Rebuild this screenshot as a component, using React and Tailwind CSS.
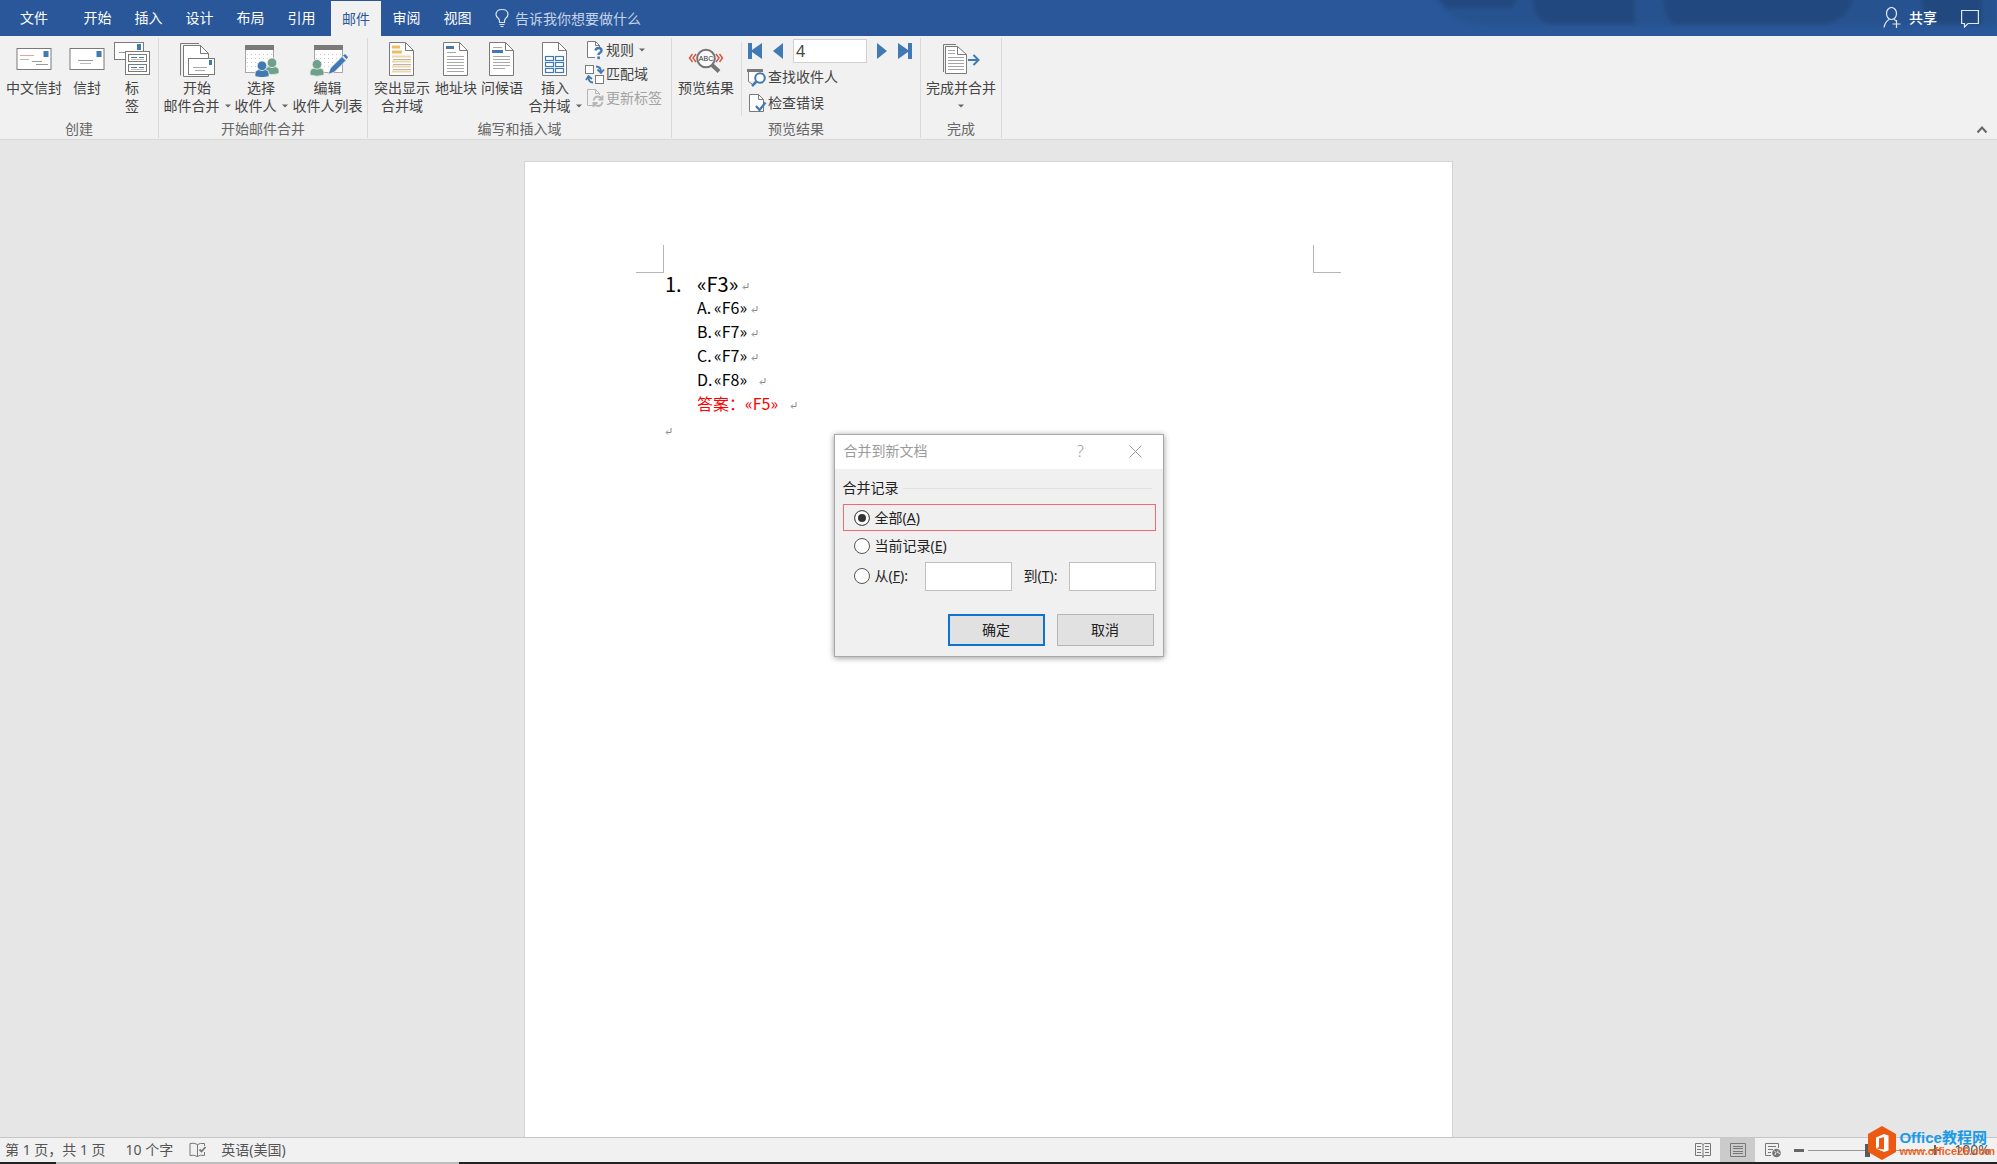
import React from "react";

const INK = "#7a7a7a";
const BLUE = "#4179b5";

function Lines({ x1, x2, ys, color = "#9a9a9a" }) {
  return ys.map((y) => <path key={y} d={`M${x1} ${y}H${x2}`} stroke={color} strokeWidth="1" />);
}

function Big({ children, w = 36 }) {
  return (
    <svg width={w} height="36" viewBox={`0 0 ${w} 36`} fill="none" className="block shrink-0" aria-hidden="true">
      {children}
    </svg>
  );
}

const ChineseEnvelopeIcon = () => (
  <Big>
    <rect x="1" y="7.5" width="34" height="21" fill="#fff" stroke={INK} />
    <rect x="27.5" y="10" width="5" height="6" fill={BLUE} />
    <Lines x1={4} x2={18} ys={[14.5]} color="#e3a3a0" />
    <Lines x1={4} x2={13} ys={[18.5]} color="#b9b9b9" />
    <Lines x1={16} x2={26} ys={[20.5]} />
    <Lines x1={20} x2={32} ys={[23.5]} />
  </Big>
);
const EnvelopeIcon = () => (
  <Big>
    <rect x="1" y="7.5" width="34" height="21" fill="#fff" stroke={INK} />
    <rect x="27.5" y="10" width="5" height="6" fill={BLUE} />
    <Lines x1={9} x2={24} ys={[19.5]} />
    <Lines x1={11} x2={22} ys={[22.5]} color="#b9b9b9" />
  </Big>
);
const LabelsIcon = () => (
  <Big>
    <rect x=".5" y="1.5" width="29" height="17" fill="#fff" stroke={INK} />
    <rect x="23" y="3" width="4" height="6" fill={BLUE} />
    <Lines x1={5} x2={12} ys={[11.5]} />
    <rect x="11.500" y="10.500" width="24" height="23" fill="#fff" stroke={INK} />
    <rect x="14.500" y="13.500" width="18" height="7" stroke={INK} />
    <rect x="14.500" y="23.500" width="18" height="7" stroke={INK} />
    <path d="M17 16.500h6M25 16.500h5M17 26.500h6M25 26.500h5" stroke={BLUE} />
    <path d="M17 18.500h13M17 28.500h13" stroke="#bbb" />
  </Big>
);
const StartMergeIcon = () => (
  <Big>
    <path d="M1.500 34.500V2.500H20" stroke={INK} />
    <path d="M4.500 35.500V4.500H21.500L29.500 12.500V35.500Z" fill="#fff" stroke={INK} />
    <path d="M21.500 4.500V12.500H29.500" stroke={INK} />
    <rect x="9.500" y="17.500" width="26" height="16" fill="#fff" stroke={INK} />
    <rect x="30" y="19" width="3" height="5" fill={BLUE} />
    <path d="M14 26.500h14M16 29.500h10" stroke="#aaa" />
  </Big>
);
const Sheet = () => (
  <>
    <rect x="2.500" y="4.500" width="28" height="27" fill="#fff" stroke="#a5a5a5" />
    <rect x="2" y="4" width="29" height="5" fill="#7a7a7a" />
    <path d="M4 13.500h25M4 17.500h25M4 21.500h25M4 25.500h25" stroke="#c9c9c9" strokeDasharray="1 3" />
  </>
);
const Person = ({ x, y, fill }) => (
  <g transform={`translate(${x} ${y})`} fill={fill} stroke="#f0f0f0" strokeWidth=".8">
    <path d="M0 15.500V12.500Q0 9 4 8.500H10Q14 9 14 12.500V15.500Q7 18 0 15.500Z" />
    <circle cx="7" cy="4.800" r="4.800" />
  </g>
);
const SelectIcon = () => (
  <Big>
    <Sheet />
    <Person x={22} y={17} fill="#6fa08a" />
    <Person x={12} y={20} fill={BLUE} />
  </Big>
);
const EditIcon = () => (
  <Big w={40}>
    <g transform="translate(4 0)"><Sheet /></g>
    <Person x={2} y={18.500} fill="#6fa08a" />
    <path d="M20 33.500L22.500 27L34 15.500L38 19.500L26.500 31Z" fill={BLUE} stroke="#f0f0f0" strokeWidth=".8" />
    <path d="M35 14.500L37 13L40 16L38.700 18.300Z" fill={BLUE} />
  </Big>
);
const Doc = ({ children }) => (
  <Big w={26}>
    <path d="M.5 2V34.500H24.500V9.500L16.500 1.500H.5Z" fill="#fff" stroke={INK} />
    <path d="M16.500 1.500V9.500H24.500" stroke={INK} />
    {children}
  </Big>
);
const HighlightIcon = () => (
  <Doc>
    <path d="M3 6H11M3 11H13" stroke="#f0bd66" strokeWidth="3" />
    <path d="M3 15.500H22M3 20.500H22M3 25.500H22M3 30.500H22" stroke="#efd6a8" strokeWidth="2" />
    <path d="M4 18.500H22M4 23.500H22M4 28.500H22" stroke="#b5b5b5" />
  </Doc>
);
const AddressIcon = () => (
  <Doc>
    <path d="M3 6.500H11" stroke={BLUE} strokeWidth="3" />
    <path d="M4 11.500H13M4 15.500H21M4 18.500H21M4 21.500H21M4 24.500H21M4 27.500H21M4 30.500H21" stroke="#a8a8a8" />
  </Doc>
);
const GreetingIcon = () => (
  <Doc>
    <path d="M3 10.500H14" stroke={BLUE} strokeWidth="3" />
    <path d="M4 6.500H13M4 15.500H21M4 18.500H21M4 21.500H21M4 24.500H21M4 27.500H16" stroke="#a8a8a8" />
  </Doc>
);
const InsertFieldIcon = () => (
  <Doc>
    <g stroke={BLUE} strokeWidth="1.200" fill="#fff">
      <rect x="3.500" y="15.500" width="8" height="4" /><rect x="13.500" y="15.500" width="8" height="4" />
      <rect x="3.500" y="21.500" width="8" height="4" /><rect x="13.500" y="21.500" width="8" height="4" />
      <rect x="3.500" y="27.500" width="8" height="4" /><rect x="13.500" y="27.500" width="8" height="4" />
    </g>
  </Doc>
);
const PreviewIcon = () => (
  <Big>
    <path d="M4.500 13L1.500 17L4.500 21M8 13L5 17L8 21M28 13L31 17L28 21M31.500 13L34.500 17L31.500 21" stroke="#dc4f3d" strokeWidth="1.400" />
    <path d="M23.500 23.500L31 30.500" stroke="#757575" strokeWidth="4" />
    <circle cx="18" cy="17.500" r="8.800" fill="#fafafa" stroke="#757575" strokeWidth="2" />
    <text x="18" y="20" fontSize="7" textAnchor="middle" fill="#333" fontFamily="Liberation Sans, sans-serif">ABC</text>
  </Big>
);
const FinishIcon = () => (
  <Big w={38}>
    <path d="M1.500 31V3.500H14" stroke={INK} />
    <path d="M3.500 32.500V5.500H15.500L24.500 13.500V32.500Z" fill="#fff" stroke={INK} />
    <path d="M15.500 5.500V13.500H24.500" stroke={INK} />
    <path d="M6 9.500H13M6 12.500H13M6 16.500H22M6 19.500H22M6 22.500H22M6 25.500H22M6 28.500H22" stroke="#a5a5a5" />
    <path d="M26 19H36M31.500 14L36.500 19L31.500 24" stroke={BLUE} strokeWidth="2" />
  </Big>
);

function Small({ children }) {
  return (
    <svg width="20" height="20" viewBox="0 0 20 20" fill="none" className="block shrink-0" aria-hidden="true">
      {children}
    </svg>
  );
}
const RulesIcon = () => (
  <Small>
    <path d="M10 17.500H2.500V1.500H10.500L14.500 5.500V8" fill="#fff" stroke={INK} />
    <path d="M10.500 1.500V5.500H14.500" stroke={INK} />
    <path d="M10.500 10.500Q11 8 13.500 8Q16.500 8 16.500 10.500Q16.500 12 14.800 13Q13.500 13.800 13.500 15" stroke={BLUE} strokeWidth="2.400" />
    <rect x="12.300" y="16.500" width="2.600" height="2.600" fill={BLUE} />
  </Small>
);
const MatchIcon = () => (
  <Small>
    <rect x=".5" y="1.500" width="8" height="8" fill="#fff" stroke={INK} />
    <rect x="10.500" y="11.500" width="8" height="8" fill="#fff" stroke={INK} />
    <path d="M11 2.500Q16 2.500 16 8M12.500 5.500L16 9L19 5.500M8 18.500Q3.500 18.500 3.500 13M1 16L3.500 12L7 15" stroke={BLUE} strokeWidth="1.800" />
  </Small>
);
const UpdateIcon = () => (
  <Small>
    <path d="M8 17.500H2.500V1.500H10.500L14.500 5.500V7M10.500 1.500V5.500H14.500" stroke="#b5b5b5" />
    <path d="M8.500 12.500Q9.500 8.500 13 8.500Q15.500 8.500 17 11M17.500 7.500V11.500H13.500M17.500 14Q16.500 18 13 18Q10.500 18 9 15.500M8.500 19V15H12.500" stroke="#b5b5b5" strokeWidth="1.800" />
  </Small>
);
const FindIcon = () => (
  <Small>
    <path d="M1.500 4V14.500L5 17" stroke={INK} />
    <rect x="2" y="5" width="13" height="9" fill="#fff" />
    <rect x="0" y="2" width="16" height="3" fill="#7a7a7a" />
    <circle cx="13" cy="11" r="4.800" fill="#fff" stroke={BLUE} strokeWidth="2" />
    <path d="M9.500 14.500L5 19" stroke={BLUE} strokeWidth="2.500" />
  </Small>
);
const CheckIcon = () => (
  <Small>
    <path d="M2.500 18.500V1.500H11.500L16.500 6.500V18.500Z" fill="#fff" stroke={INK} />
    <path d="M11.500 1.500V6.500H16.500" stroke={INK} />
    <path d="M9 13L12.500 17L18.500 9.500" stroke={BLUE} strokeWidth="2.200" />
  </Small>
);

const Arrow = () => (
  <svg width="6" height="4" viewBox="0 0 6 4" className="inline-block shrink-0" aria-hidden="true">
    <path d="M0 .5H6L3 3.500Z" fill="#666" />
  </svg>
);

function BigButton({ icon, line1, line2, arrow, width }) {
  return (
    <button type="button" className={`flex ${width} shrink-0 flex-col items-center gap-0.5 pt-[3px] text-sm leading-[18px] whitespace-nowrap`}>
      {icon}
      <span className="flex flex-col items-center">
        <span>{line1}</span>
        {(line2 || arrow) && (
          <span className="flex h-[18px] items-center gap-[5px]">
            {line2 && <span>{line2}</span>}
            {arrow && <Arrow />}
          </span>
        )}
      </span>
    </button>
  );
}

function SmallButton({ icon, label, arrow, disabled, height }) {
  return (
    <button type="button" disabled={disabled} className={`flex ${height} items-center gap-px text-sm leading-[18px] whitespace-nowrap disabled:text-[#a3a3a3]`}>
      {icon}
      <span>{label}</span>
      {arrow && <span className="flex pl-1"><Arrow /></span>}
    </button>
  );
}

function Group({ title, children, pad = "" }) {
  return (
    <section aria-label={title} className="flex flex-col border-r border-[#d9d9d9]">
      <div className={`flex h-[82px] ${pad}`}>{children}</div>
      <div className="text-center text-sm leading-[18px] text-[#666]">{title}</div>
    </section>
  );
}

function NavButton({ label, d, w }) {
  return (
    <button type="button" aria-label={label}>
      <svg width={w} height="16" viewBox={`0 0 ${w} 16`} fill={BLUE} className="block"><path d={d} /></svg>
    </button>
  );
}

const Tab = ({ children }) => (
  <button type="button" className="w-[51px] text-center">{children}</button>
);

function TitleBar() {
  return (
    <header className="relative flex h-9 shrink-0 items-stretch bg-[#2a579a] text-sm text-white">
      <svg className="absolute top-0 right-0" width="570" height="36" viewBox="0 0 570 36" aria-hidden="true">
        <defs>
          <filter id="haze" x="-10%" y="-40%" width="120%" height="180%"><feGaussianBlur stdDeviation="2" /></filter>
        </defs>
        <g filter="url(#haze)">
          <path d="M5 -8H570V26H60Q20 24 5 -8Z" fill="#28528f" />
          <path d="M5 -8H95L85 8H20ZM105 -8H208V24H125Q105 22 105 -8ZM236 -8H428Q424 20 395 25H250Q236 22 236 -8ZM494 -8H555V25H515Q494 22 494 -8Z" fill="#23487f" />
        </g>
      </svg>
      <nav className="flex" aria-label="功能区选项卡">
        <button type="button" className="mr-1 w-[68px] text-center">文件</button>
        <Tab>开始</Tab>
        <Tab>插入</Tab>
        <Tab>设计</Tab>
        <Tab>布局</Tab>
        <Tab>引用</Tab>
        <button type="button" aria-current="page" className="mt-px ml-1 w-[50px] bg-[#f1f1f1] text-center text-[#2a579a]">邮件</button>
        <Tab>审阅</Tab>
        <Tab>视图</Tab>
      </nav>
      <button type="button" className="ml-3 flex items-center gap-[6px] text-[#c5d3ea]">
        <svg width="14" height="20" viewBox="0 0 14 20" fill="none" stroke="#dbe5f5" strokeWidth="1.200" aria-hidden="true">
          <path d="M4.500 14.500V13Q4.500 11.500 3 10Q1 8.500 1 6.500Q1 1.500 7 1.500Q13 1.500 13 6.500Q13 8.500 11 10Q9.500 11.500 9.500 13V14.500ZM4.500 16.500H9.500M5.500 18.500H8.500" />
        </svg>
        <span className="pt-0.5">告诉我你想要做什么</span>
      </button>
      <div className="relative ml-auto flex items-center gap-5 pr-[18px]">
        <button type="button" className="flex items-center gap-2">
          <svg width="18" height="22" viewBox="0 0 18 22" fill="none" stroke="#dfe8f5" strokeWidth="1.200" aria-hidden="true">
            <ellipse cx="8.500" cy="6.500" rx="5" ry="6" />
            <path d="M1 20.500Q2 15 6 12.500M11 12.500Q12.500 13 13 14M13.500 13V21M9.500 17H17.500" />
          </svg>
          <span className="font-medium">共享</span>
        </button>
        <button type="button" aria-label="批注" className="ml-1">
          <svg width="18" height="20" viewBox="0 0 18 20" fill="none" stroke="#dfe8f5" strokeWidth="1.200" aria-hidden="true">
            <path d="M.6 2.500H17.400V15.500H7L3.500 19V15.500H.6Z" />
          </svg>
        </button>
      </div>
    </header>
  );
}

function Ribbon() {
  return (
    <div className="flex shrink-0 items-stretch border-b border-[#d8d8d8] bg-[#f1f1f1] pt-0.5 pb-px text-[#444]">
      <Group title="创建" pad="px-0.5">
        <BigButton width="w-16" icon={<ChineseEnvelopeIcon />} line1="中文信封" />
        <BigButton width="w-[42px]" icon={<EnvelopeIcon />} line1="信封" />
        <BigButton width="w-12" icon={<LabelsIcon />} line1="标" line2="签" />
      </Group>
      <Group title="开始邮件合并" pad="pl-1 pr-[3px]">
        <BigButton width="w-[68px]" icon={<StartMergeIcon />} line1="开始" line2="邮件合并" arrow />
        <BigButton width="w-[60px]" icon={<SelectIcon />} line1="选择" line2="收件人" arrow />
        <BigButton width="w-[73px]" icon={<EditIcon />} line1="编辑" line2="收件人列表" />
      </Group>
      <Group title="编写和插入域" pad="pl-[3px] pr-[9px]">
        <BigButton width="w-[62px]" icon={<HighlightIcon />} line1="突出显示" line2="合并域" />
        <BigButton width="w-[46px]" icon={<AddressIcon />} line1="地址块" />
        <BigButton width="w-[46px]" icon={<GreetingIcon />} line1="问候语" />
        <BigButton width="w-[60px]" icon={<InsertFieldIcon />} line1="插入" line2="合并域" arrow />
        <div className="flex flex-col">
          <SmallButton height="h-6" icon={<RulesIcon />} label="规则" arrow />
          <SmallButton height="h-6" icon={<MatchIcon />} label="匹配域" />
          <SmallButton height="h-6" icon={<UpdateIcon />} label="更新标签" disabled />
        </div>
      </Group>
      <Group title="预览结果" pad="pl-0.5 pr-[7px]">
        <BigButton width="w-16" icon={<PreviewIcon />} line1="预览结果" />
        <div className="mx-[3px] my-1 w-px bg-[#dcdcdc]" />
        <div className="flex flex-col pl-0.5">
          <div className="flex h-[26px] items-center gap-[10px]">
            <NavButton label="首记录" w={16} d="M1 0H5V7L15 0V16L5 9V16H1Z" />
            <NavButton label="上一记录" w={10} d="M10 0V16L0 8Z" />
            <input aria-label="记录" defaultValue="4" className="h-6 w-[74px] border border-[#d0d0d0] bg-white px-0.5 text-base leading-5" />
            <NavButton label="下一记录" w={10} d="M0 0V16L10 8Z" />
            <NavButton label="尾记录" w={16} d="M15 0H11V7L1 0V16L11 9V16H15Z" />
          </div>
          <SmallButton height="h-[26px]" icon={<FindIcon />} label="查找收件人" />
          <SmallButton height="h-[26px]" icon={<CheckIcon />} label="检查错误" />
        </div>
      </Group>
      <Group title="完成" pad="px-[3px]">
        <BigButton width="w-[74px]" icon={<FinishIcon />} line1="完成并合并" arrow />
      </Group>
      <button type="button" aria-label="折叠功能区" className="mt-auto mr-[9px] mb-1 ml-auto">
        <svg width="12" height="9" viewBox="0 0 12 9" fill="none" stroke="#666" strokeWidth="2" aria-hidden="true"><path d="M1.500 7.500L6 2.500L10.500 7.500" /></svg>
      </button>
    </div>
  );
}

const Mark = () => (
  <svg width="7" height="7" viewBox="0 0 7 7" fill="none" stroke="#8a8a8a" className="mt-1 inline-block" aria-hidden="true">
    <path d="M6 0V4.500H1.500M3 2.500L1 4.500L3 6.500" />
  </svg>
);

function Option({ letter, field, wide }) {
  return (
    <li className="flex items-center">
      <span className="w-[17px]">{letter}.</span>
      <span>{field}</span>
      <span className={wide ? "flex pl-3" : "flex pl-1"}><Mark /></span>
    </li>
  );
}

function Document() {
  return (
    <article className="w-[929px] border border-b-0 border-[#d4d4d4] bg-white pt-[83px] text-black">
      <div className="flex justify-between px-[111px]">
        <div className="h-7 w-7 border-r border-b border-[#b5b5b5]" />
        <div className="h-7 w-7 border-b border-l border-[#b5b5b5]" />
      </div>
      <div className="pl-[140px] font-['Noto_Sans_CJK_SC',sans-serif]">
        <div className="flex h-[22px] items-center text-xl leading-5">
          <span className="w-8">1.</span>
          <span>«F3»</span>
          <span className="flex pl-1"><Mark /></span>
        </div>
        <ul className="pl-8 text-base leading-6">
          <Option letter="A" field="«F6»" />
          <Option letter="B" field="«F7»" />
          <Option letter="C" field="«F7»" />
          <Option letter="D" field="«F8»" wide />
          <li className="flex items-center text-[#f00]">
            答案：«F5»<span className="flex pl-3"><Mark /></span>
          </li>
        </ul>
        <div className="flex h-7 items-center"><Mark /></div>
      </div>
    </article>
  );
}

const radio = "size-4 shrink-0 appearance-none rounded-full border border-[#555] bg-white checked:border-[#555] checked:bg-[#333] checked:shadow-[inset_0_0_0_3px_#fff]";

function MergeDialog() {
  return (
    <form
      role="dialog"
      aria-label="合并到新文档"
      onSubmit={(e) => e.preventDefault()}
      className="absolute top-[294px] left-1/2 w-[330px] -translate-x-1/2 border border-[#a8a8a8] bg-[#f0f0f0] pb-2.5 text-sm leading-[18px] text-[#222] shadow-[0_1px_6px_rgba(0,0,0,0.4)]"
    >
      <div className="flex h-[34px] items-center bg-white pb-0.5 pl-[9px] text-[#9a9a9a]">
        <span>合并到新文档</span>
        <button type="button" aria-label="帮助" className="ml-auto w-8 text-base font-light">?</button>
        <button type="button" aria-label="关闭" className="mr-[21px] ml-8">
          <svg width="13" height="13" viewBox="0 0 13 13" fill="none" stroke="#999" aria-hidden="true"><path d="M.5 .5L12.500 12.500M12.500 .5L.5 12.500" /></svg>
        </button>
      </div>
      <fieldset className="pr-[7px] pl-2">
        <legend className="float-left flex w-full items-center gap-1 pt-2.5 pb-[7px] after:mr-1 after:h-px after:flex-1 after:bg-[#dfdfdf]">合并记录</legend>
        <label className="clear-both flex h-[27px] items-center gap-[5px] border border-[#f4686f] pl-2.5">
          <input type="radio" name="range" defaultChecked className={radio} />
          <span>全部(<u>A</u>)</span>
        </label>
        <label className="flex h-[30px] items-center gap-[5px] pl-[11px]">
          <input type="radio" name="range" className={radio} />
          <span>当前记录(<u>E</u>)</span>
        </label>
        <div className="flex h-[30px] items-center pl-[11px]">
          <label className="flex w-[71px] items-center gap-[5px]">
            <input type="radio" name="range" className={radio} />
            <span>从(<u>F</u>):</span>
          </label>
          <input aria-label="从" className="h-[29px] w-[87px] border border-[#c0c0c0] bg-white px-1" />
          <label htmlFor="to" className="ml-3 flex-1">到(<u>T</u>):</label>
          <input id="to" className="h-[29px] w-[87px] border border-[#c0c0c0] bg-white px-1" />
        </div>
      </fieldset>
      <div className="mt-[23px] flex justify-end gap-3 pr-[9px]">
        <button type="submit" className="h-8 w-[97px] border-2 border-[#0f74cf] bg-[#e1e1e1]">确定</button>
        <button type="button" className="h-8 w-[97px] border border-[#b5b5b5] bg-[#e1e1e1]">取消</button>
      </div>
    </form>
  );
}

function Watermark() {
  return (
    <div className="absolute right-0.5 bottom-1 flex items-center gap-[3px]">
      <svg width="28" height="34" viewBox="0 0 28 34" aria-hidden="true">
        <path d="M14 0L28 8V26L14 34L0 26V8Z" fill="#eb5a10" />
        <path fillRule="evenodd" d="M8 11.500L16 8L20.500 9.500V24.500L16 26L8 22.500L16 23.500V11L11 12.500V21L8 22.500Z" fill="#fff" />
      </svg>
      <div className="font-bold whitespace-nowrap">
        <div className="font-['Liberation_Sans','Noto_Sans_CJK_SC',sans-serif] text-[15px] leading-[15px] text-[#1a9be6]">Office教程网</div>
        <div className="font-['Liberation_Sans',sans-serif] text-[11px] leading-3 text-[#f0651e]">www.office26.com</div>
      </div>
    </div>
  );
}

function StatusBar() {
  return (
    <footer className="relative shrink-0">
      <div className="flex h-[25px] items-stretch border-t border-[#c6c6c6] bg-[#f1f1f1] text-sm leading-6 text-[#555]">
        <span className="pl-[5px]">第 1 页，共 1 页</span>
        <span className="pl-5">10 个字</span>
        <svg width="18" height="16" viewBox="0 0 18 16" fill="none" stroke="#777" className="mt-1 ml-4" aria-hidden="true">
          <path d="M8.500 2.500Q5 .5 1 1.500V13.500Q5 12.500 8.500 14.500ZM8.500 2.500Q11 1 15.500 1.500V4M8.500 14.500Q11 12.500 15.500 13.500V10" />
          <path d="M10.500 7.500L12.500 9.500L16.500 5" strokeWidth="1.800" />
        </svg>
        <span className="pl-[14px]">英语(美国)</span>
        <div className="ml-auto flex items-center">
          <button type="button" aria-label="阅读视图" className="mr-[9px]">
            <svg width="16" height="16" viewBox="0 0 16 16" fill="none" stroke="#777" aria-hidden="true">
              <path d="M8 2.500L6.500 1.500H.5V13.500H6.500L8 14.500L9.500 13.500H15.500V1.500H9.500ZM8 2.500V16M2 4.500H6M2 7.500H6M2 10.500H6M10 4.500H14M10 7.500H14M10 10.500H14" />
            </svg>
          </button>
          <button type="button" aria-label="页面视图" className="flex h-full w-[35px] items-center justify-center bg-[#cbcbcb]">
            <svg width="16" height="14" viewBox="0 0 16 14" fill="none" stroke="#777" aria-hidden="true">
              <path d="M.5 .5H15.500V13.500H.5ZM3 3.500H13M3 5.500H13M3 8.500H13M3 10.500H13" />
            </svg>
          </button>
          <button type="button" aria-label="Web 版式视图" className="mr-3 ml-[10px]">
            <svg width="17" height="16" viewBox="0 0 17 16" fill="none" stroke="#777" aria-hidden="true">
              <path d="M6 13.500H.5V1.500H13.500V6M3 4.500H11M3 7.500H8M3 10.500H6" />
              <circle cx="11.500" cy="11" r="4.300" fill="#777" stroke="none" />
              <path d="M9 8.500L11 10.500L10 13M13 8.500L12.500 10.500L15 11.500" stroke="#eee" />
            </svg>
          </button>
          <button type="button" aria-label="缩小" className="h-[3px] w-[10px] bg-[#666]" />
          <input
            type="range"
            aria-label="显示比例"
            defaultValue="50"
            className="mx-1 h-4 w-[118px] appearance-none bg-transparent [&::-webkit-slider-runnable-track]:h-px [&::-webkit-slider-runnable-track]:bg-[#999] [&::-webkit-slider-thumb]:-mt-1.5 [&::-webkit-slider-thumb]:h-[13px] [&::-webkit-slider-thumb]:w-[5px] [&::-webkit-slider-thumb]:appearance-none [&::-webkit-slider-thumb]:bg-[#5a5a5a]"
          />
          <button type="button" aria-label="放大">
            <svg width="10" height="10" viewBox="0 0 10 10" stroke="#666" strokeWidth="2" className="block" aria-hidden="true"><path d="M0 5H10M5 0V10" /></svg>
          </button>
          <span className="pr-[7px] pl-[14px]">100%</span>
        </div>
      </div>
      <div className="flex h-0.5 bg-[#222]"><div className="ml-14 w-[403px] bg-[#bdbdbd]" /></div>
      <Watermark />
    </footer>
  );
}

export default function App() {
  return (
    <div className="flex h-screen flex-col overflow-hidden bg-[#e6e6e6] font-['Noto_Sans','Noto_Sans_CJK_SC',sans-serif]">
      <TitleBar />
      <Ribbon />
      <main className="relative flex min-h-0 flex-1 justify-center pt-[21px] pr-5">
        <Document />
        <MergeDialog />
      </main>
      <StatusBar />
    </div>
  );
}
